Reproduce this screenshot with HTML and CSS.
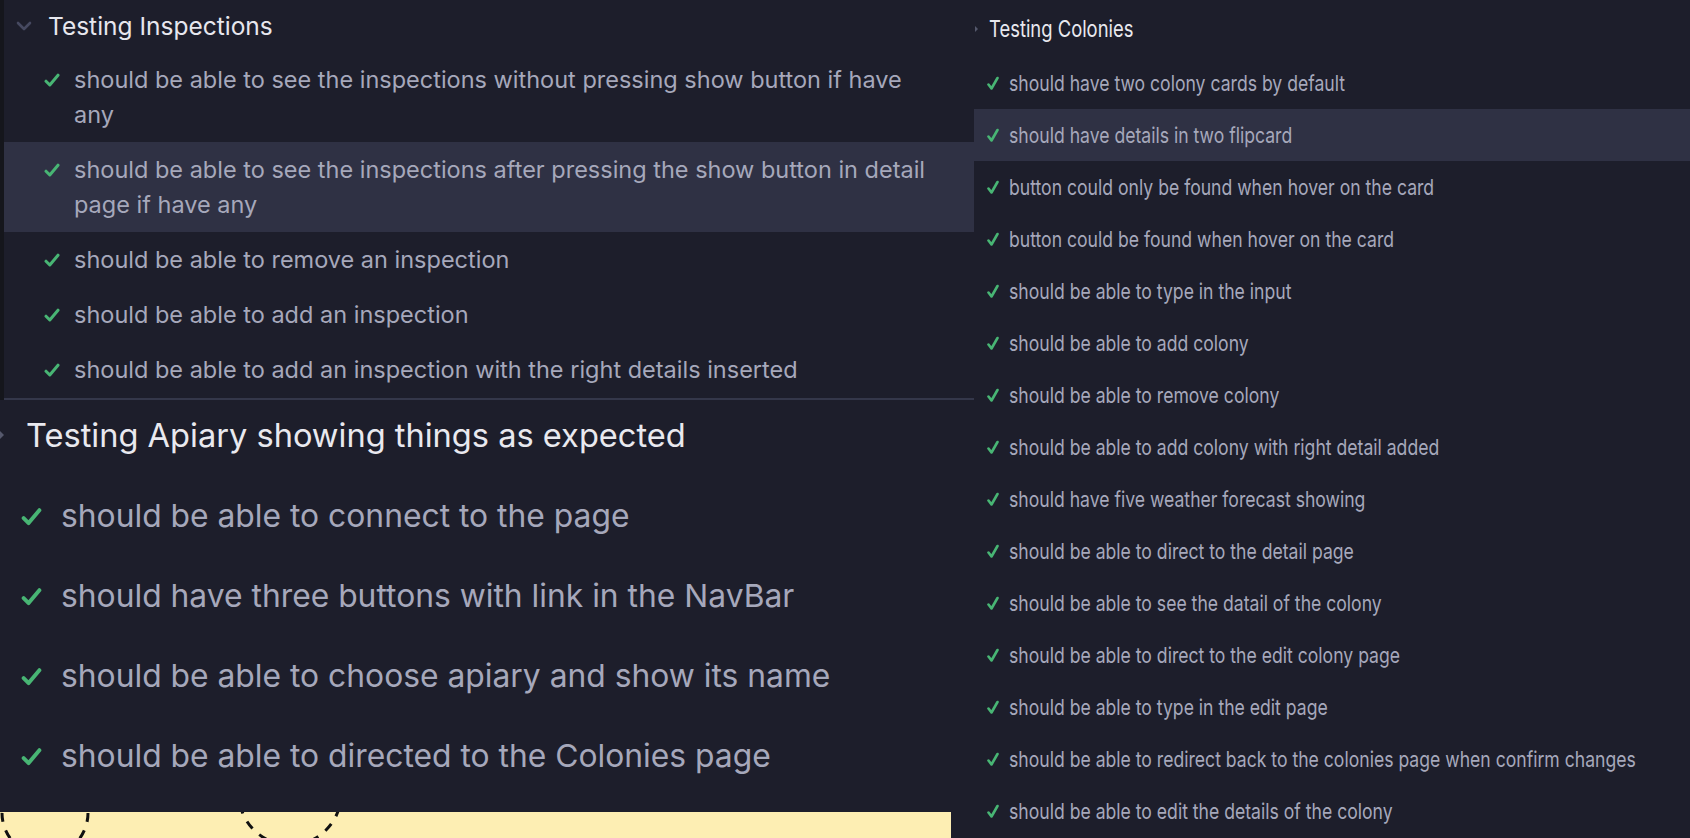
FILE: index.html
```html
<!DOCTYPE html>
<html>
<head>
<meta charset="utf-8">
<link rel="stylesheet" href="styles.css">
</head>
<body>
<div class="page">
  <div class="left">
    <section class="panel-top">
      <div class="list-top">
        <div class="suite-head">
          <svg class="chev-down" width="16" height="10" viewBox="0 0 16 10"><polyline points="2,2 8,8 14,2" fill="none" stroke="#464960" stroke-width="2.6" stroke-linecap="round" stroke-linejoin="round"/></svg>
          <span class="suite-title">Testing Inspections</span>
        </div>
        <div class="row">
          <svg class="check" width="16" height="16" viewBox="0 0 16 16"><path d="M2 9.2 L5.8 13 L14 3.2" fill="none" stroke="#48b574" stroke-width="3" stroke-linecap="round" stroke-linejoin="round"/></svg>
          <span class="row-text">should be able to see the inspections without pressing show button if have any</span>
        </div>
        <div class="row active">
          <svg class="check" width="16" height="16" viewBox="0 0 16 16"><path d="M2 9.2 L5.8 13 L14 3.2" fill="none" stroke="#48b574" stroke-width="3" stroke-linecap="round" stroke-linejoin="round"/></svg>
          <span class="row-text">should be able to see the inspections after pressing the show button in detail page if have any</span>
        </div>
        <div class="row">
          <svg class="check" width="16" height="16" viewBox="0 0 16 16"><path d="M2 9.2 L5.8 13 L14 3.2" fill="none" stroke="#48b574" stroke-width="3" stroke-linecap="round" stroke-linejoin="round"/></svg>
          <span class="row-text">should be able to remove an inspection</span>
        </div>
        <div class="row">
          <svg class="check" width="16" height="16" viewBox="0 0 16 16"><path d="M2 9.2 L5.8 13 L14 3.2" fill="none" stroke="#48b574" stroke-width="3" stroke-linecap="round" stroke-linejoin="round"/></svg>
          <span class="row-text">should be able to add an inspection</span>
        </div>
        <div class="row">
          <svg class="check" width="16" height="16" viewBox="0 0 16 16"><path d="M2 9.2 L5.8 13 L14 3.2" fill="none" stroke="#48b574" stroke-width="3" stroke-linecap="round" stroke-linejoin="round"/></svg>
          <span class="row-text">should be able to add an inspection with the right details inserted</span>
        </div>
      </div>
    </section>

    <section class="panel-mid">
      <div class="big-head">
        <svg class="chev-cut" width="4" height="12" viewBox="0 0 4 12"><polygon points="0,2 4,6 0,10" fill="#55586c"/></svg>
        <span class="big-title">Testing Apiary showing things as expected</span>
      </div>
      <div class="big-row">
        <svg class="big-check" width="21" height="21" viewBox="0 0 16 16"><path d="M2 9.2 L5.8 13 L14 3.2" fill="none" stroke="#48b574" stroke-width="3" stroke-linecap="round" stroke-linejoin="round"/></svg>
        <span class="big-text">should be able to connect to the page</span>
      </div>
      <div class="big-row">
        <svg class="big-check" width="21" height="21" viewBox="0 0 16 16"><path d="M2 9.2 L5.8 13 L14 3.2" fill="none" stroke="#48b574" stroke-width="3" stroke-linecap="round" stroke-linejoin="round"/></svg>
        <span class="big-text">should have three buttons with link in the NavBar</span>
      </div>
      <div class="big-row">
        <svg class="big-check" width="21" height="21" viewBox="0 0 16 16"><path d="M2 9.2 L5.8 13 L14 3.2" fill="none" stroke="#48b574" stroke-width="3" stroke-linecap="round" stroke-linejoin="round"/></svg>
        <span class="big-text">should be able to choose apiary and show its name</span>
      </div>
      <div class="big-row">
        <svg class="big-check" width="21" height="21" viewBox="0 0 16 16"><path d="M2 9.2 L5.8 13 L14 3.2" fill="none" stroke="#48b574" stroke-width="3" stroke-linecap="round" stroke-linejoin="round"/></svg>
        <span class="big-text">should be able to directed to the Colonies page</span>
      </div>
    </section>

    <div class="yellow">
      <svg width="951" height="26" viewBox="0 0 951 26">
        <circle cx="45" cy="1" r="43" fill="none" stroke="#111" stroke-width="3" stroke-dasharray="9 9"/>
        <circle cx="290" cy="-18" r="51" fill="none" stroke="#111" stroke-width="3" stroke-dasharray="9 9" stroke-dashoffset="4"/>
      </svg>
    </div>
  </div>

  <section class="right">
    <div class="col-head">
      <svg class="chev-tiny" width="3" height="8" viewBox="0 0 3 8"><polygon points="0,1 3,4 0,7" fill="#55586c"/></svg>
      <span class="sq col-title">Testing Colonies</span>
    </div>
    <div class="col-row"><svg class="col-check" width="12" height="15" viewBox="0 0 12 15"><path d="M1.5 8.5 L4.5 12.5 L10.5 2" fill="none" stroke="#48b574" stroke-width="2.6" stroke-linecap="round" stroke-linejoin="round"/></svg><span class="sq col-text">should have two colony cards by default</span></div>
    <div class="col-row active"><svg class="col-check" width="12" height="15" viewBox="0 0 12 15"><path d="M1.5 8.5 L4.5 12.5 L10.5 2" fill="none" stroke="#48b574" stroke-width="2.6" stroke-linecap="round" stroke-linejoin="round"/></svg><span class="sq col-text">should have details in two flipcard</span></div>
    <div class="col-row"><svg class="col-check" width="12" height="15" viewBox="0 0 12 15"><path d="M1.5 8.5 L4.5 12.5 L10.5 2" fill="none" stroke="#48b574" stroke-width="2.6" stroke-linecap="round" stroke-linejoin="round"/></svg><span class="sq col-text">button could only be found when hover on the card</span></div>
    <div class="col-row"><svg class="col-check" width="12" height="15" viewBox="0 0 12 15"><path d="M1.5 8.5 L4.5 12.5 L10.5 2" fill="none" stroke="#48b574" stroke-width="2.6" stroke-linecap="round" stroke-linejoin="round"/></svg><span class="sq col-text">button could be found when hover on the card</span></div>
    <div class="col-row"><svg class="col-check" width="12" height="15" viewBox="0 0 12 15"><path d="M1.5 8.5 L4.5 12.5 L10.5 2" fill="none" stroke="#48b574" stroke-width="2.6" stroke-linecap="round" stroke-linejoin="round"/></svg><span class="sq col-text">should be able to type in the input</span></div>
    <div class="col-row"><svg class="col-check" width="12" height="15" viewBox="0 0 12 15"><path d="M1.5 8.5 L4.5 12.5 L10.5 2" fill="none" stroke="#48b574" stroke-width="2.6" stroke-linecap="round" stroke-linejoin="round"/></svg><span class="sq col-text">should be able to add colony</span></div>
    <div class="col-row"><svg class="col-check" width="12" height="15" viewBox="0 0 12 15"><path d="M1.5 8.5 L4.5 12.5 L10.5 2" fill="none" stroke="#48b574" stroke-width="2.6" stroke-linecap="round" stroke-linejoin="round"/></svg><span class="sq col-text">should be able to remove colony</span></div>
    <div class="col-row"><svg class="col-check" width="12" height="15" viewBox="0 0 12 15"><path d="M1.5 8.5 L4.5 12.5 L10.5 2" fill="none" stroke="#48b574" stroke-width="2.6" stroke-linecap="round" stroke-linejoin="round"/></svg><span class="sq col-text">should be able to add colony with right detail added</span></div>
    <div class="col-row"><svg class="col-check" width="12" height="15" viewBox="0 0 12 15"><path d="M1.5 8.5 L4.5 12.5 L10.5 2" fill="none" stroke="#48b574" stroke-width="2.6" stroke-linecap="round" stroke-linejoin="round"/></svg><span class="sq col-text">should have five weather forecast showing</span></div>
    <div class="col-row"><svg class="col-check" width="12" height="15" viewBox="0 0 12 15"><path d="M1.5 8.5 L4.5 12.5 L10.5 2" fill="none" stroke="#48b574" stroke-width="2.6" stroke-linecap="round" stroke-linejoin="round"/></svg><span class="sq col-text">should be able to direct to the detail page</span></div>
    <div class="col-row"><svg class="col-check" width="12" height="15" viewBox="0 0 12 15"><path d="M1.5 8.5 L4.5 12.5 L10.5 2" fill="none" stroke="#48b574" stroke-width="2.6" stroke-linecap="round" stroke-linejoin="round"/></svg><span class="sq col-text">should be able to see the datail of the colony</span></div>
    <div class="col-row"><svg class="col-check" width="12" height="15" viewBox="0 0 12 15"><path d="M1.5 8.5 L4.5 12.5 L10.5 2" fill="none" stroke="#48b574" stroke-width="2.6" stroke-linecap="round" stroke-linejoin="round"/></svg><span class="sq col-text">should be able to direct to the edit colony page</span></div>
    <div class="col-row"><svg class="col-check" width="12" height="15" viewBox="0 0 12 15"><path d="M1.5 8.5 L4.5 12.5 L10.5 2" fill="none" stroke="#48b574" stroke-width="2.6" stroke-linecap="round" stroke-linejoin="round"/></svg><span class="sq col-text">should be able to type in the edit page</span></div>
    <div class="col-row"><svg class="col-check" width="12" height="15" viewBox="0 0 12 15"><path d="M1.5 8.5 L4.5 12.5 L10.5 2" fill="none" stroke="#48b574" stroke-width="2.6" stroke-linecap="round" stroke-linejoin="round"/></svg><span class="sq col-text">should be able to redirect back to the colonies page when confirm changes</span></div>
    <div class="col-row"><svg class="col-check" width="12" height="15" viewBox="0 0 12 15"><path d="M1.5 8.5 L4.5 12.5 L10.5 2" fill="none" stroke="#48b574" stroke-width="2.6" stroke-linecap="round" stroke-linejoin="round"/></svg><span class="sq col-text">should be able to edit the details of the colony</span></div>
  </section>
</div>
</body>
</html>
```

FILE: styles.css
```css
* { box-sizing: border-box; }

html, body {
  margin: 0;
  padding: 0;
  background: #1d1e2b;
}

body {
  width: 1690px;
  height: 838px;
  overflow: hidden;
  font-family: Inter, "Noto Sans", sans-serif;
  color: #a6a8bb;
}

.page {
  display: grid;
  grid-template-columns: 974px 716px;
  height: 838px;
}

.left {
  display: flex;
  flex-direction: column;
  min-width: 0;
}

/* top panel */
.panel-top {
  border-left: 4px solid #15161c;
  height: 400px;
}

.list-top {
  border-bottom: 2px solid #34374a;
  height: 400px;
}

.suite-head {
  height: 52px;
  display: flex;
  align-items: center;
  padding-left: 12px;
}

.chev-down {
  flex: none;
  margin-right: 16px;
}

.suite-title {
  font-size: 24.5px;
  color: #e7e7ee;
}

.row {
  display: flex;
  align-items: flex-start;
  padding: 10px 40px 10px 40px;
}

.row.active {
  background: #2f3144;
}

.check {
  flex: none;
  margin-top: 10px;
  margin-right: 14px;
}

.row-text {
  font-size: 23.5px;
  line-height: 35px;
  color: #a6a8bb;
}

/* middle panel */
.panel-mid {
  height: 412px;
  display: flex;
  flex-direction: column;
}

.big-head {
  height: 70px;
  margin-bottom: 5px;
  display: flex;
  align-items: center;
}

.chev-cut {
  flex: none;
  margin-right: 22px;
}

.big-title {
  font-size: 32.6px;
  color: #e9e9ef;
}

.big-row {
  height: 80px;
  display: flex;
  align-items: center;
  padding-left: 21px;
}

.big-check {
  flex: none;
  margin-right: 19px;
  margin-top: 3px;
}

.big-text {
  font-size: 31.8px;
  color: #a6a8bb;
}

/* yellow strip */
.yellow {
  width: 951px;
  height: 26px;
  background: #fdeeb3;
  overflow: hidden;
}

.yellow svg {
  display: block;
}

/* right column */
.right {
  display: flex;
  flex-direction: column;
  overflow: hidden;
}

.col-head {
  height: 57px;
  display: flex;
  align-items: center;
  padding-left: 1px;
}

.chev-tiny {
  flex: none;
  margin-right: 11px;
}

.col-row {
  height: 52px;
  flex: none;
  display: flex;
  align-items: center;
  padding-left: 13px;
}

.col-row.active {
  background: #2f3144;
}

.col-check {
  flex: none;
  margin-right: 10px;
}

.sq {
  display: inline-block;
  white-space: nowrap;
  transform: scaleX(0.8);
  transform-origin: left center;
}

.col-title {
  font-size: 23px;
  color: #e9e9ef;
}

.col-text {
  font-size: 22px;
  color: #a6a8bb;
}
```
